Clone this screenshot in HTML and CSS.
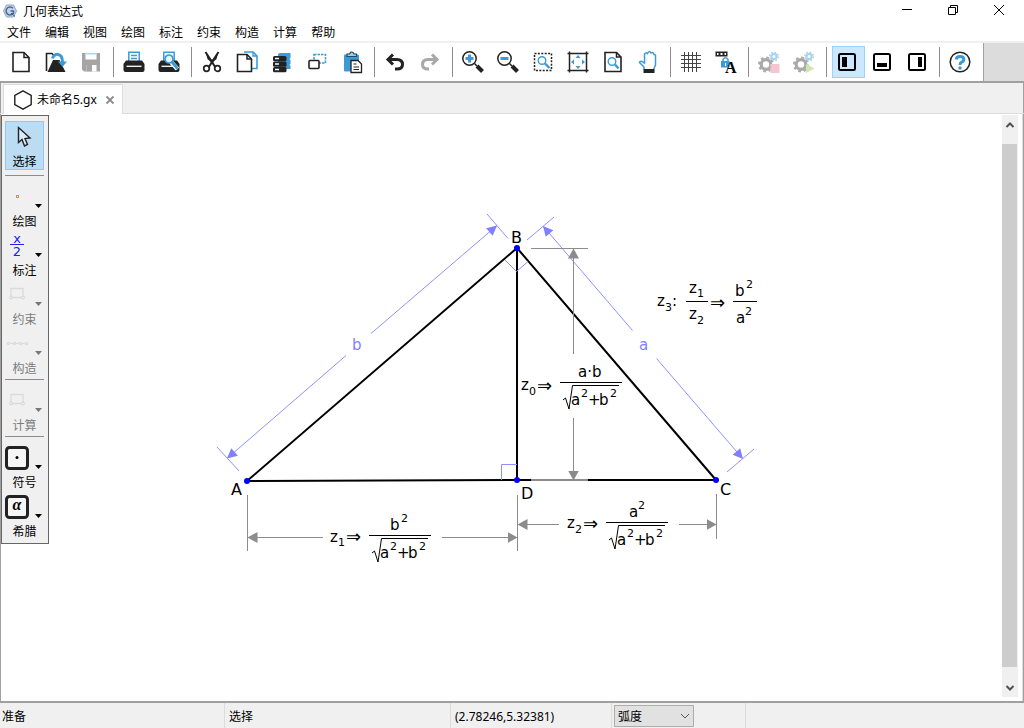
FILE: index.html
```html
<!DOCTYPE html>
<html lang="zh-CN">
<head>
<meta charset="utf-8">
<title>几何表达式</title>
<link rel="stylesheet" href="styles.css">
</head>
<body>
<div class="app">
  <header class="titlebar">
    <svg class="app-logo" viewBox="0 0 14 14" aria-hidden="true">
      <path d="M3.500 1h7L13.500 7l-3 6h-7L.500 7z" fill="#c3d5ea" stroke="#8ba6c6"/>
      <path d="M10 4.200A4 4 0 1 0 10.500 9V7H7.500" fill="none" stroke="#4c6c92" stroke-width="1.500"/>
      <path d="M8 9l4 3.500" stroke="#35506f"/>
    </svg>
    <h1 class="app-title">几何表达式</h1>
    <div class="window-controls">
      <button class="window-button" aria-label="最小化"><svg viewBox="0 0 12 12"><path d="M1 5.500h10"/></svg></button>
      <button class="window-button" aria-label="还原"><svg viewBox="0 0 12 12"><path d="M1.500 3.500h7v7h-7zM3.500 3.500v-2h7v7h-2"/></svg></button>
      <button class="window-button" aria-label="关闭"><svg viewBox="0 0 12 12"><path d="M1 1l10 10M11 1L1 11"/></svg></button>
    </div>
  </header>

  <nav class="menubar">
    <button class="menu">文件</button>
    <button class="menu">编辑</button>
    <button class="menu">视图</button>
    <button class="menu">绘图</button>
    <button class="menu">标注</button>
    <button class="menu">约束</button>
    <button class="menu">构造</button>
    <button class="menu">计算</button>
    <button class="menu">帮助</button>
  </nav>

  <div class="toolbar-row">
    <div class="toolbar" role="toolbar">
      <button class="tool" aria-label="新建"><svg viewBox="-15 -15 30 30"><path d="M-8-9.500H3L8-4.500V9.500H-8z" fill="#fff" stroke="#222" stroke-width="1.600"/><path d="M3-9.500V-4.500H8" fill="none" stroke="#222" stroke-width="1.500"/></svg></button>
      <button class="tool" aria-label="打开"><svg viewBox="-15 -15 30 30"><path d="M-9.500 9V-8.500H-4L-2-6.500H0" fill="none" stroke="#222" stroke-width="1.600"/><path d="M-8.500 10L-3-2H3.500L9.500 10z" fill="#222"/><path d="M-3.500-3.500C-2-9.500 6.500-9.500 6.500 0" fill="none" stroke="#3c9bd6" stroke-width="3"/><path d="M2-.5H11L6.500 5z" fill="#3c9bd6"/></svg></button>
      <button class="tool" aria-label="保存" disabled><svg viewBox="-15 -15 30 30"><path d="M-9-9H9V9.500H-7L-9 7.500z" fill="#a5a5a5"/><path d="M-5.500-9H5.500V-2.500H-5.500z" fill="#fff"/><path d="M-5.500-9H5.500V-7.500H-5.500z" fill="#a9d8f3"/><path d="M-4.500 3H5.500V9.500H-4.500z" fill="#fff"/><path d="M-4.500 3H1V9.500H-4.500z" fill="#a5a5a5"/></svg></button>
      <span class="divider"></span>
      <button class="tool" aria-label="打印"><svg viewBox="-15 -15 30 30"><path d="M-5.200-1V-9.800H5.200V-1" fill="#fff" stroke="#3c9bd6" stroke-width="1.500"/><path d="M-3-6.500H3M-3-3.500H3" stroke="#3c9bd6" stroke-width="1.300"/><path d="M-8-1.500H8L10.500 2V8Q10.500 10 8.500 10H-8.500Q-10.500 10-10.500 8V2z" fill="#222"/><path d="M-7.500 4.300H7.500" stroke="#fff" stroke-width="1.300"/></svg></button>
      <button class="tool" aria-label="打印预览"><svg viewBox="-15 -15 30 30"><path d="M-5.200-1V-9.800H5.200V-1" fill="#fff" stroke="#3c9bd6" stroke-width="1.500"/><path d="M-8-1.500H8L10.500 2V8Q10.500 10 8.500 10H-8.500Q-10.500 10-10.500 8V2z" fill="#222"/><path d="M-7.500 4.300H7.500" stroke="#fff" stroke-width="1.300"/><path d="M2 0L8.500 7" stroke="#fff" stroke-width="4.500"/><circle cy="-3" r="4" fill="#e5f3fb" stroke="#3c9bd6" stroke-width="1.700"/><path d="M3 0L8.500 6.500" stroke="#3c9bd6" stroke-width="2.800"/></svg></button>
      <span class="divider"></span>
      <button class="tool" aria-label="剪切"><svg viewBox="-15 -15 30 30"><path d="M-6.500-10L3.500 5.500M6.500-10L-3.500 5.500" stroke="#222" stroke-width="2"/><path d="M-6.500-10L-4.500-3 1 2 1.500 0zM6.500-10L4.500-3-1 2-1.500 0z" fill="#222"/><circle cx="-5.500" cy="6.500" r="2.800" fill="#fff" stroke="#222" stroke-width="1.700"/><circle cx="5.500" cy="6.500" r="2.800" fill="#fff" stroke="#222" stroke-width="1.700"/></svg></button>
      <button class="tool" aria-label="复制"><svg viewBox="-15 -15 30 30"><path d="M-3-10H6L10-6V6.500H3" fill="#fff" stroke="#3c9bd6" stroke-width="1.600"/><path d="M6-10V-6H10" fill="none" stroke="#3c9bd6" stroke-width="1.300"/><path d="M-9.500-7.500H0L4.500-3V9.500H-9.500z" fill="#fff" stroke="#222" stroke-width="1.600"/><path d="M0-7.500V-3H4.500" fill="none" stroke="#222" stroke-width="1.500"/></svg></button>
      <button class="tool" aria-label="复制层"><svg viewBox="-15 -15 30 30"><path d="M-4-7Q-4-9-2-9H8.500V-4L7.500-3 8.500-2V2L7.500 3 8.500 4V7H-4z" fill="#3c9bd6"/><rect x="-9" y="-6" width="13.500" height="5.200" rx="1.500" fill="#222"/><rect x="-9" y="-.5" width="13.500" height="5.200" rx="1.500" fill="#222"/><rect x="-9" y="5" width="13.500" height="5.200" rx="1.500" fill="#222"/><path d="M-7-3.500H-3M-7 2H-3M-7 7.500H-3" stroke="#fff" stroke-width="1.500"/></svg></button>
      <button class="tool" aria-label="组合"><svg viewBox="-15 -15 30 30"><rect x="-3" y="-7.500" width="11.500" height="8.500" fill="none" stroke="#3c9bd6" stroke-width="1.500" stroke-dasharray="2.500 1"/><rect x="-8" y="-1.500" width="10" height="8" rx="1" fill="#fff" stroke="#222" stroke-width="1.600"/></svg></button>
      <button class="tool" aria-label="粘贴"><svg viewBox="-15 -15 30 30"><rect x="-8" y="-7.500" width="15" height="17" rx="1" fill="#3c9bd6"/><path d="M-5-5.500V-8H-2.500Q-1-11 1-9.500L2-8H4.500V-5.500z" fill="#9ed0ee" stroke="#26495f" stroke-width="1.200"/><path d="M-1-1.500H6L9.500 2V10.500H-1z" fill="#fff" stroke="#222" stroke-width="1.300"/><path d="M1.500 2H4.500M1.500 5H7M1.500 7.500H7" stroke="#222" stroke-width="1.200"/></svg></button>
      <span class="divider"></span>
      <button class="tool" aria-label="撤销"><svg viewBox="-15 -15 30 30"><path d="M-2-7.500L-7-2.500-2 2.500" fill="none" stroke="#222" stroke-width="3"/><path d="M-6-2.500H2Q7.500-2.500 7.500 2.500Q7.500 7 2 7H0" fill="none" stroke="#222" stroke-width="3"/></svg></button>
      <button class="tool" aria-label="重做" disabled><svg viewBox="-15 -15 30 30"><path d="M2-7.500L7-2.500 2 2.500" fill="none" stroke="#a9a9a9" stroke-width="3"/><path d="M6-2.500H-2Q-7.500-2.500-7.500 2.500Q-7.500 7-2 7H-1" fill="none" stroke="#a9a9a9" stroke-width="3"/></svg></button>
      <span class="divider"></span>
      <button class="tool" aria-label="放大"><svg viewBox="-15 -15 30 30"><circle cx="-3.500" cy="-3.500" r="6.700" fill="#fff" stroke="#222" stroke-width="1.500"/><path d="M-7.500-3.500H.5M-3.500-7.500V.5" stroke="#3c9bd6" stroke-width="3"/><path d="M1.500 1.500L4 4" stroke="#222" stroke-width="1.500"/><path d="M4 4L9.500 9.500" stroke="#222" stroke-width="4"/></svg></button>
      <button class="tool" aria-label="缩小"><svg viewBox="-15 -15 30 30"><circle cx="-3.500" cy="-3.500" r="6.700" fill="#fff" stroke="#222" stroke-width="1.500"/><path d="M-7.500-3.500H.5" stroke="#3c9bd6" stroke-width="3"/><path d="M1.500 1.500L4 4" stroke="#222" stroke-width="1.500"/><path d="M4 4L9.500 9.500" stroke="#222" stroke-width="4"/></svg></button>
      <button class="tool" aria-label="缩放到选择"><svg viewBox="-15 -15 30 30"><rect x="-8.500" y="-8.500" width="17" height="17" fill="none" stroke="#222" stroke-width="1.500" stroke-dasharray="2 1.400"/><circle cx="-1" cy="-1.500" r="3.800" fill="#fff" stroke="#3c9bd6" stroke-width="1.400"/><path d="M2 1.500L6.500 6" stroke="#3c9bd6" stroke-width="2.400"/></svg></button>
      <button class="tool" aria-label="适应窗口"><svg viewBox="-15 -15 30 30"><path d="M-8.500-10.500V10.500M8.500-10.500V10.500M-10.500-8.500H10.500M-10.500 8.500H10.500" stroke="#222" stroke-width="1.500"/><path d="M0-7L2.500-4H-2.500zM0 7L2.500 4H-2.500zM-7 0L-4-2.500V2.500zM7 0L4-2.500V2.500z" fill="#3c9bd6"/></svg></button>
      <button class="tool" aria-label="页面缩放"><svg viewBox="-15 -15 30 30"><path d="M-8-9.500H3.500L8-5V9.500H-8z" fill="#fff" stroke="#222" stroke-width="1.600"/><path d="M3.500-9.500V-5H8" fill="none" stroke="#222" stroke-width="1.500"/><circle cx="-1" cy="-.5" r="3.800" fill="none" stroke="#3c9bd6" stroke-width="1.400"/><path d="M2 2.500L5.500 6.500" stroke="#3c9bd6" stroke-width="2.400"/></svg></button>
      <button class="tool" aria-label="平移"><svg viewBox="-15 -15 30 30"><path d="M-4 7.500V5L-8.500.500Q-8 -2-4.500.500L-3.500 1V-8Q-2-10-.5-8.500Q1-12 3-9Q5-10.500 6-7.500Q8-7.500 7.500-5V3L5.500 7.500" fill="#fff" stroke="#3c9bd6" stroke-width="1.500"/><path d="M-4.500 7H6.500V11H-4.500z" fill="#222"/></svg></button>
      <span class="divider"></span>
      <button class="tool" aria-label="网格"><svg viewBox="-15 -15 30 30"><path d="M-6.500-10V10M-2.500-10V10M1.500-10V10M5.500-10V10M-10-6.500H10M-10-2.500H10M-10 1.500H10M-10 5.500H10" stroke="#444"/></svg></button>
      <button class="tool" aria-label="锁定标签"><svg viewBox="-15 -15 30 30"><path d="M-10.500-10.500H1.500V-5.500H-10.500z" fill="#222"/><path d="M-9-8H-7.500M-5.500-8H-3.500M-1.500-8H0" stroke="#fff" stroke-width="2"/><path d="M-3-1V-2.500Q-.5-6 2-2.500V-1" fill="none" stroke="#3c9bd6" stroke-width="1.500"/><rect x="-5" y="-1" width="8.500" height="6.500" fill="#3c9bd6"/><path d="M-.5 1V4" stroke="#fff"/><text class="letter-icon" x="-1" y="11">A</text></svg></button>
      <span class="divider"></span>
      <button class="tool" aria-label="停止" disabled><svg viewBox="-15 -15 30 30"><circle cx="-3" cy="2.500" r="4.800" fill="none" stroke="#a9a9a9" stroke-width="3.200"/><circle cx="-3" cy="2.500" r="7" fill="none" stroke="#a9a9a9" stroke-width="2" stroke-dasharray="2.700 2.800"/><circle cx="5" cy="-5.500" r="2.600" fill="none" stroke="#a9d5ee" stroke-width="2.200"/><circle cx="5" cy="-5.500" r="4.200" fill="none" stroke="#a9d5ee" stroke-width="1.600" stroke-dasharray="1.650 1.650"/><rect x="1.500" y="2" width="9" height="9" fill="#f4c6d4"/></svg></button>
      <button class="tool" aria-label="运行" disabled><svg viewBox="-15 -15 30 30"><circle cx="-3" cy="2.500" r="4.800" fill="none" stroke="#a9a9a9" stroke-width="3.200"/><circle cx="-3" cy="2.500" r="7" fill="none" stroke="#a9a9a9" stroke-width="2" stroke-dasharray="2.700 2.800"/><circle cx="5" cy="-5.500" r="2.600" fill="none" stroke="#a9d5ee" stroke-width="2.200"/><circle cx="5" cy="-5.500" r="4.200" fill="none" stroke="#a9d5ee" stroke-width="1.600" stroke-dasharray="1.650 1.650"/><path d="M2 2L10.500 6.500 2 11z" fill="#cfe5ac"/></svg></button>
      <span class="divider"></span>
      <button class="tool tool-on" aria-label="左侧面板" aria-pressed="true"><svg viewBox="-15 -15 30 30"><rect x="-8" y="-8" width="16" height="16" rx="1.500" fill="none" stroke="#000" stroke-width="2"/><path d="M-5-5H0V5H-5z"/></svg></button>
      <button class="tool" aria-label="底部面板"><svg viewBox="-15 -15 30 30"><rect x="-8" y="-8" width="16" height="16" rx="1.500" fill="#fff" stroke="#000" stroke-width="2"/><path d="M-5 1H5V5H-5z"/></svg></button>
      <button class="tool" aria-label="右侧面板"><svg viewBox="-15 -15 30 30"><rect x="-8" y="-8" width="16" height="16" rx="1.500" fill="#fff" stroke="#000" stroke-width="2"/><path d="M1-5H5V5H1z"/></svg></button>
      <span class="divider"></span>
      <button class="tool" aria-label="帮助"><svg viewBox="-15 -15 30 30"><circle r="9.800" fill="#fff" stroke="#222" stroke-width="1.500"/><path d="M-3.800-2.500Q-3.500-5.500 0-5.500Q3.800-5.500 3.800-2.600Q3.800-.8 1.500.2Q0 .9 0 3" fill="none" stroke="#3c9bd6" stroke-width="3"/><circle cy="6" r="1.700" fill="#3c9bd6"/></svg></button>
    </div>
  </div>

  <div class="tabbar">
    <div class="tab">
      <svg class="tab-icon" viewBox="0 0 20 20" aria-hidden="true"><path d="M10 .9L18.200 5.500V14.500L10 19.100 1.800 14.500V5.500z" fill="none" stroke="#222" stroke-width="1.400"/></svg>
      <span>未命名5.gx</span>
      <button class="tab-close" aria-label="关闭标签"><svg viewBox="0 0 10 10"><path d="M1.500 1.500l7 7M8.500 1.500l-7 7" stroke="#8c8c8c" stroke-width="1.800"/></svg></button>
    </div>
  </div>

  <main class="workspace">
    <aside class="palette">
      <button class="pick pick-on"><svg viewBox="0 0 39 32"><path d="M13.500 6.500V21.500L17 18.500 19.500 25 22.500 23.500 20 17.500 25 17z" fill="#dcecf8" stroke="#222" stroke-width="1.400"/></svg><span>选择</span></button>
      <hr class="rule rule-first">
      <button class="pick"><svg viewBox="0 0 39 32"><rect x="11.500" y="14.500" width="2" height="2" fill="#fff" stroke="#e09a20"/><path d="M30 23H37L33.500 27z"/></svg><span>绘图</span></button>
      <button class="pick"><svg viewBox="0 0 39 32"><text class="fraction-icon" x="12" y="13">x</text><path d="M5 14.500H19" stroke="#2020f0"/><text class="fraction-icon" x="12" y="26">2</text><path d="M30 23H37L33.500 27z"/></svg><span>标注</span></button>
      <button class="pick" disabled><svg viewBox="0 0 39 32"><path d="M6 18V9.500H18V18M7 18.500H17" fill="none" stroke="#dadada" stroke-width="1.300"/><circle cx="6" cy="18.500" r="1.500" fill="#eee" stroke="#d5d5d5"/><circle cx="18" cy="18.500" r="1.500" fill="#eee" stroke="#d5d5d5"/><path d="M30 23H37L33.500 27z" fill="#777"/></svg><span>约束</span></button>
      <button class="pick" disabled><svg viewBox="0 0 39 32"><path d="M3 15.500H22" stroke="#ddd"/><path d="M2.500 14.500h2v2h-2zM8.500 14.500h2v2h-2zM14.500 14.500h2v2h-2zM20.500 14.500h2v2h-2z" fill="#eee" stroke="#d8d8d8"/><path d="M30 23H37L33.500 27z" fill="#777"/></svg><span>构造</span></button>
      <hr class="rule">
      <button class="pick" disabled><svg viewBox="0 0 39 32"><path d="M6 18V9.500H18V18M7 18.500H17" fill="none" stroke="#dadada" stroke-width="1.300"/><circle cx="6" cy="18.500" r="1.500" fill="#eee" stroke="#d5d5d5"/><circle cx="18" cy="18.500" r="1.500" fill="#eee" stroke="#d5d5d5"/><path d="M30 23H37L33.500 27z" fill="#777"/></svg><span>计算</span></button>
      <hr class="rule">
      <button class="pick"><svg viewBox="0 0 39 32"><rect x="1.500" y="5.500" width="21" height="21" rx="3" fill="#f6f6f6" stroke="#222" stroke-width="3"/><circle cx="12" cy="15.500" r="1.500"/><path d="M30 23H37L33.500 27z"/></svg><span>符号</span></button>
      <button class="pick"><svg viewBox="0 0 39 32"><rect x="1.500" y="5.500" width="21" height="21" rx="3" fill="#f6f6f6" stroke="#222" stroke-width="3"/><text class="greek-icon" x="12" y="19">α</text><path d="M30 23H37L33.500 27z"/></svg><span>希腊</span></button>
    </aside>

    <svg class="drawing" role="img" aria-label="直角三角形 ABC 与高 BD">
      <defs>
        <marker id="arrow-blue" markerUnits="userSpaceOnUse" markerWidth="12" markerHeight="12" refX="11" refY="6" orient="auto-start-reverse"><path d="M1 1L11 6 1 11z" fill="#8080ff"/></marker>
        <marker id="arrow-gray" markerUnits="userSpaceOnUse" markerWidth="12" markerHeight="12" refX="10" refY="6" orient="auto-start-reverse"><path d="M0 .5L10 6 0 11.500z" fill="#8c8c8c"/></marker>
        <g id="hypotenuse">
          <path class="math-line" d="M0 .5H62M3 18L5.500 16 9 27 12.500 3.500H59"/>
          <text x="11" y="23">a</text><text class="small" x="21" y="15">2</text>
          <text x="28" y="23">+</text><text x="39" y="23">b</text><text class="small" x="50" y="15">2</text>
        </g>
      </defs>
      <g transform="translate(-49 -114)">
        <g class="edges">
          <path d="M247 481L517 248 716 480M517 248V480M247 481L517 480M517 480H716"/>
        </g>
        <g class="dim-blue">
          <path d="M346 355.500L227 458.500" marker-end="url(#arrow-blue)"/>
          <path d="M371 333.500L497 225.500" marker-end="url(#arrow-blue)"/>
          <path d="M632.500 330.500L543 226" marker-end="url(#arrow-blue)"/>
          <path d="M656.500 358.500L743 459" marker-end="url(#arrow-blue)"/>
          <path d="M487 214L508 238.500M217 447L239 471M527 240L554 217M727 472L754 449"/>
          <path d="M505 260L516.500 271.500 528 261.500M501.500 480V464.500H517"/>
        </g>
        <g class="dim-gray">
          <path d="M573.500 354V248.500" marker-end="url(#arrow-gray)"/>
          <path d="M573.500 418V480.500" marker-end="url(#arrow-gray)"/>
          <path d="M531 248.500H588M247.500 495V551M517.500 495V551M716.500 494V539"/>
          <path class="base-extension" d="M531 480H588"/>
          <path d="M323 537.500H247.500" marker-end="url(#arrow-gray)"/>
          <path d="M442 537.500H517.500" marker-end="url(#arrow-gray)"/>
          <path d="M559 524.500H517.500" marker-end="url(#arrow-gray)"/>
          <path d="M679 524.500H716.500" marker-end="url(#arrow-gray)"/>
        </g>
        <g class="points">
          <circle cx="247" cy="481" r="3"/><circle cx="517" cy="248" r="3"/><circle cx="716" cy="480" r="3"/><circle cx="517" cy="480" r="3"/>
        </g>
        <g class="labels">
          <text x="231" y="495">A</text><text x="511" y="243">B</text><text x="720" y="495">C</text><text x="521" y="499">D</text>
        </g>
        <g class="math math-blue"><text x="352" y="350">b</text><text x="639" y="350">a</text></g>
        <g class="math">
          <text x="521" y="390">z</text><text class="small" x="529" y="395">0</text><text class="implies" x="537" y="392">⇒</text>
          <text x="578" y="377">a·b</text><use href="#hypotenuse" x="560" y="382"/>

          <text x="330" y="542">z</text><text class="small" x="338" y="546">1</text><text class="implies" x="346" y="543">⇒</text>
          <text x="390" y="530">b</text><text class="small" x="401" y="522">2</text><use href="#hypotenuse" x="369" y="535"/>

          <text x="567" y="528">z</text><text class="small" x="575" y="533">2</text><text class="implies" x="583" y="530">⇒</text>
          <text x="629" y="517">a</text><text class="small" x="638" y="509">2</text><use href="#hypotenuse" x="606" y="522"/>

          <text x="657" y="306">z</text><text class="small" x="665" y="311">3</text><text x="672" y="306">:</text>
          <text x="689" y="293">z</text><text class="small" x="697" y="297">1</text>
          <text x="689" y="319">z</text><text class="small" x="697" y="324">2</text>
          <text class="implies" x="710" y="309">⇒</text>
          <text x="735" y="296">b</text><text class="small" x="746" y="288">2</text>
          <text x="736" y="323">a</text><text class="small" x="745" y="315">2</text>
          <path class="math-line" d="M686 301.500H708M733 301.500H757"/>
        </g>
      </g>
    </svg>

    <div class="scrollbar">
      <button class="scroll-button" aria-label="向上滚动"><svg viewBox="0 0 10 10"><path d="M1.500 7L5 3.500 8.500 7"/></svg></button>
      <div class="scroll-track"><div class="scroll-thumb"></div></div>
      <button class="scroll-button" aria-label="向下滚动"><svg viewBox="0 0 10 10"><path d="M1.500 3L5 6.500 8.500 3"/></svg></button>
    </div>
  </main>

  <footer class="statusbar">
    <span class="status">准备</span>
    <span class="status">选择</span>
    <span class="status">(2.78246,5.32381)</span>
    <span class="status status-unit"><select class="unit" aria-label="角度单位"><option>弧度</option><option>角度</option></select><svg class="unit-arrow" viewBox="0 0 10 10" aria-hidden="true"><path d="M1 3l4 4 4-4"/></svg></span>
    <span class="status"></span>
  </footer>
</div>
</body>
</html>
```
FILE: styles.css
```css
* { box-sizing: border-box; }

body {
  margin: 0;
  background: #f0f0f0;
  color: #000;
  font: 12px/16px "Noto Sans", "Noto Sans CJK SC", sans-serif;
}

button {
  margin: 0;
  padding: 0;
  border: 0;
  background: none;
  color: inherit;
  font: inherit;
}

.app {
  display: flex;
  flex-direction: column;
  height: 100vh;
}

/* Title bar and menus */
.titlebar {
  display: flex;
  align-items: center;
  height: 22px;
  padding: 0 2px 0 3px;
  background: #fff;
}
.app-logo { width: 14px; height: 14px; margin-right: 6px; }
.app-title { margin: 0; padding-top: 2px; font-size: 12px; font-weight: 400; }
.window-controls { display: flex; margin-left: auto; }
.window-button { display: flex; justify-content: center; width: 46px; padding: 3px 0 5px; }
.window-button svg { width: 12px; height: 12px; fill: none; stroke: #000; }

.menubar {
  display: flex;
  height: 21px;
  padding-top: 2px;
  background: #fff;
  border-bottom: 2px solid #f0f0f0;
}
.menu { padding: 0 7px; }

/* Toolbar */
.toolbar-row {
  display: flex;
  background: #dcdcdc;
  border-bottom: 2px solid #a0a0a0;
}
.toolbar {
  display: flex;
  align-items: center;
  gap: 2px;
  height: 38px;
  padding: 0 5px 0 6px;
  background: #fff;
  border-right: 1px solid #a0a0a0;
}
.tool { display: flex; align-items: center; width: 33px; height: 32px; }
.tool svg { width: 30px; height: 30px; }
.tool-on { background: #cce8ff; box-shadow: inset 0 0 0 1px #99d1ff; }
.divider { width: 1px; height: 30px; margin: 0 3px 0 2px; background: #8c8c8c; }
.letter-icon { font: bold 16px "Liberation Serif", serif; }

/* Document tabs */
.tabbar {
  display: flex;
  height: 31px;
  padding: 1px 3px 0;
  border-bottom: 1px solid #dcdcdc;
  box-shadow: inset 1px 0 #a0a0a0, inset -1px 0 #a0a0a0;
}
.tab {
  display: flex;
  align-items: center;
  height: 30px;
  padding: 0 7px 0 9px;
  background: #fff;
  border: 1px solid #dcdcdc;
  border-bottom: 0;
}
.tab-icon { width: 20px; height: 20px; margin-right: 4px; }
.tab-close { display: flex; margin-left: 8px; }
.tab-close svg { width: 10px; height: 10px; }

/* Workspace */
.workspace {
  display: flex;
  flex: 1;
  min-height: 0;
  background: #fff;
  border-left: 1px solid #a0a0a0;
  border-right: 1px solid #a0a0a0;
  border-bottom: 2px solid #a0a0a0;
}
.palette {
  align-self: flex-start;
  width: 48px;
  margin-top: 1px;
  padding: 5px 4px 3px 3px;
  background: #f0f0f0;
  border: 1px solid #666;
}
.pick {
  display: flex;
  flex-direction: column;
  align-items: center;
  gap: 1px;
  width: 100%;
  height: 49px;
}
.pick svg { display: block; width: 39px; height: 32px; flex: none; }
.pick:disabled { color: #7d7d7d; }
.pick-on { background: #bcdcf4; box-shadow: inset 0 0 0 1px #90c8f6; }
.rule { height: 1px; margin: 2px 0 5px; border: 0; background: #8c8c8c; }
.rule-first { margin-top: 5px; }
.fraction-icon { font: 13px "DejaVu Sans", sans-serif; fill: #2020f0; text-anchor: middle; }
.greek-icon { font: italic bold 16px "Liberation Serif", serif; text-anchor: middle; }

.drawing { flex: 1; min-width: 0; height: 100%; }
.edges { fill: none; stroke: #000; stroke-width: 2; }
.dim-blue { fill: none; stroke: #9090ff; }
.dim-gray { fill: none; stroke: #8c8c8c; }
.base-extension { stroke-width: 2; }
.points { fill: #00f; }
.labels { font: 16px "DejaVu Sans", sans-serif; }
.math { font: 15px "DejaVu Sans", sans-serif; }
.math-blue { fill: #8080ff; }
.math-line { fill: none; stroke: #000; }
.small { font-size: 11px; }
.implies { font-size: 18px; }

.scrollbar {
  display: flex;
  flex-direction: column;
  width: 21px;
  padding: 1px 2px 4px 0;
  border-right: 1px solid #dcdcdc;
  box-shadow: inset -2px 0 #fff;
}
.scroll-button {
  display: flex;
  align-items: center;
  justify-content: center;
  width: 16px;
  height: 19px;
  background: #f0f0f0;
}
.scroll-button svg { width: 10px; height: 10px; fill: none; stroke: #505050; stroke-width: 2; }
.scroll-track { flex: 1; width: 16px; padding: 10px 1px 11px 0; background: #f0f0f0; }
.scroll-thumb { height: 100%; background: #cdcdcd; }

/* Status bar */
.statusbar {
  display: grid;
  grid-template-columns: 225px 226px 161px 134px 1fr;
  height: 25px;
}
.status {
  display: flex;
  align-items: center;
  padding: 2px 4px 0;
  border-right: 1px solid #dcdcdc;
}
.status:first-child { padding-left: 2px; }
.status:last-child { border: 0; }
.status-unit { padding: 1px 2px 0; }
.unit {
  width: 80px;
  height: 22px;
  padding: 1px 3px 0;
  appearance: none;
  background: #e1e1e1;
  border: 1px solid #adadad;
  border-radius: 0;
  color: #000;
  font: inherit;
}
.unit-arrow {
  width: 10px;
  height: 10px;
  margin-left: -14px;
  fill: none;
  stroke: #555;
  pointer-events: none;
}
```
